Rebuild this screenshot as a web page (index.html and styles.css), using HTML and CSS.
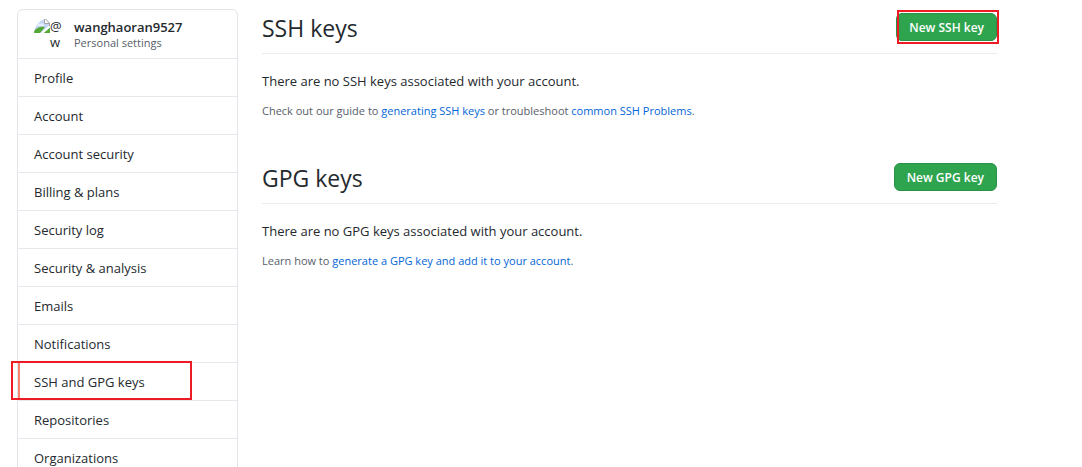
FILE: index.html
```html
<!DOCTYPE html>
<html lang="en">
<head>
<meta charset="utf-8">
<meta name="viewport" content="width=device-width, initial-scale=1">
<title>SSH and GPG keys</title>
<link rel="stylesheet" href="styles.css">
</head>
<body>
<div class="page">
  <nav class="menu" aria-label="Personal settings">
    <div class="account">
      <div class="avatar">
        <svg class="avatar-icon" viewBox="0 0 16 16" aria-hidden="true">
          <path d="M0 14V1h11l5 5v3l-7 6H0z" fill="#c3d6f5"/>
          <path d="M3 8c0-2 2-3 3-2 2-2 5 0 4 2z" fill="#e6effc"/>
          <path d="M0 15v-2c3-4 7-5 11-4l-5 6z" fill="#54a838"/>
          <path d="M9.500 15L16 9.500V15z" fill="#54a838"/>
          <path d="M6 15.500L15.500 7v2.500L9 15.500z" fill="#fff"/>
          <path d="M10.500 1v4.500h5z" fill="#fff"/>
          <path d="M8 .5h3l4.500 4.500v3M10.500 .5v5h5" fill="none" stroke="#a5a5a5"/>
        </svg>
        <span class="avatar-alt">@<br>w</span>
      </div>
      <div class="identity">
        <strong class="username">wanghaoran9527</strong>
        <span class="subtitle">Personal settings</span>
      </div>
    </div>
    <ul class="menu-list">
      <li class="menu-row"><a class="menu-link" href="#profile">Profile</a></li>
      <li class="menu-row"><a class="menu-link" href="#account">Account</a></li>
      <li class="menu-row"><a class="menu-link" href="#account-security">Account security</a></li>
      <li class="menu-row"><a class="menu-link" href="#billing">Billing &amp; plans</a></li>
      <li class="menu-row"><a class="menu-link" href="#log">Security log</a></li>
      <li class="menu-row"><a class="menu-link" href="#analysis">Security &amp; analysis</a></li>
      <li class="menu-row"><a class="menu-link" href="#emails">Emails</a></li>
      <li class="menu-row"><a class="menu-link" href="#notifications">Notifications</a></li>
      <li class="menu-row marked-row"><a class="menu-link current" href="#keys" aria-current="page">SSH and GPG keys</a></li>
      <li class="menu-row"><a class="menu-link" href="#repositories">Repositories</a></li>
      <li class="menu-row"><a class="menu-link" href="#organizations">Organizations</a></li>
    </ul>
  </nav>
  <main class="content">
    <section class="keys">
      <header class="keys-head">
        <h2 class="title">SSH keys</h2>
        <div class="marked-button"><button class="button" type="button">New SSH key</button></div>
      </header>
      <p class="message">There are no SSH keys associated with your account.</p>
      <p class="help">Check out our guide to <a class="link" href="#generating">generating SSH keys</a> or troubleshoot <a class="link" href="#problems">common SSH Problems</a>.</p>
    </section>
    <section class="keys">
      <header class="keys-head">
        <h2 class="title">GPG keys</h2>
        <button class="button" type="button">New GPG key</button>
      </header>
      <p class="message">There are no GPG keys associated with your account.</p>
      <p class="help">Learn how to <a class="link" href="#generate-gpg">generate a GPG key and add it to your account</a>.</p>
    </section>
  </main>
</div>
</body>
</html>
```
FILE: styles.css
```css
* { box-sizing: border-box; }

body {
  margin: 0;
  background: #fff;
  color: #24292e;
  font-family: "Segoe UI", "Open Sans", "Noto Sans", sans-serif;
  font-size: 13px;
  line-height: 20px;
}

.page {
  display: flex;
  align-items: flex-start;
  gap: 24px;
  height: 100vh;
  overflow: hidden;
  padding: 9px 85px 0 17px;
}

.menu {
  flex: 0 0 221px;
  border: 1px solid #e1e4e8;
  border-radius: 6px;
}

.account {
  display: flex;
  gap: 8px;
  height: 49px;
  padding: 8px 16px;
  border-bottom: 1px solid #e6e8eb;
}

.avatar {
  display: flex;
  width: 32px;
  height: 32px;
}

.avatar-icon {
  flex: none;
  width: 16px;
  height: 16px;
  border-top-left-radius: 16px;
}

.avatar-alt { line-height: 16px; }

.identity {
  display: flex;
  flex-direction: column;
}

.username { font-weight: 600; line-height: 18px; }

.subtitle {
  color: #586069;
  font-size: 11px;
  line-height: 14px;
}

.menu-list {
  margin: 0;
  padding: 0;
  list-style: none;
}

.menu-row {
  height: 38px;
  border-bottom: 1px solid #e6e8eb;
}

.menu-row:last-child { border-bottom: 0; }

.menu-link {
  display: block;
  position: relative;
  height: 100%;
  padding: 9px 16px;
  color: #24292e;
  text-decoration: none;
}

.current::before {
  content: "";
  position: absolute;
  inset: 0 auto 0 0;
  width: 2px;
  background: #f9826c;
}

.marked-row, .marked-button { position: relative; }

.marked-row::after, .marked-button::after {
  content: "";
  position: absolute;
  border: 2px solid #ed1c24;
  pointer-events: none;
}

.marked-row::after { inset: -2px 45px 0 -7px; }

.marked-button::after { inset: -3px -2px -3px 1px; }

.content {
  flex: 1;
  min-width: 0;
}

.keys { margin-bottom: 39px; }

.keys-head {
  display: flex;
  align-items: center;
  justify-content: space-between;
  height: 45px;
  padding-bottom: 8px;
  border-bottom: 1px solid #eaecef;
}

.title {
  margin: 0;
  padding-top: 2px;
  font-size: 23px;
  font-weight: 400;
  line-height: 34px;
}

.button {
  display: block;
  height: 28px;
  padding: 2px 12px 0;
  border: 1px solid #2a9147;
  border-radius: 6px;
  background: #2ea44f;
  color: #fff;
  font-family: inherit;
  font-size: 12px;
  font-weight: 600;
  line-height: 20px;
}

.message { margin: 17px 0 0; }

.help {
  margin: 11px 0 0;
  color: #586069;
  font-size: 11px;
  line-height: 18px;
}

.link {
  color: #0366d6;
  text-decoration: none;
}
```
